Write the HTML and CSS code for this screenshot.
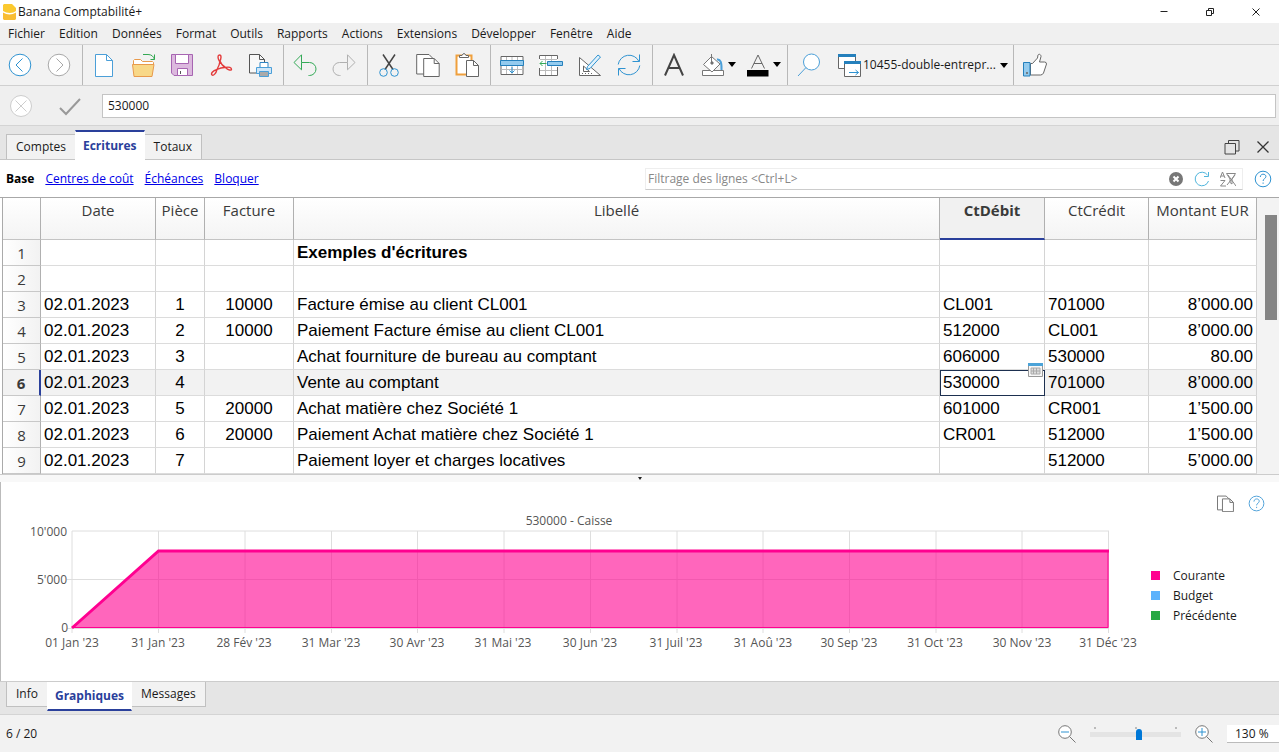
FILE: index.html
```html
<!DOCTYPE html>
<html lang="fr">
<head>
<meta charset="utf-8">
<title>Banana Comptabilité+</title>
<link rel="stylesheet" href="styles.css">
</head>
<body>
<svg class="defs" aria-hidden="true">
  <symbol id="copy" viewBox="0 0 24 24"><path d="M8 21H.7V1.5H13l4 4" fill="#fff"/><path d="M7.7 5.5h10.5l5 5v13H7.7z" fill="#fff"/><path d="M18.2 5.5v5h5"/></symbol>
  <symbol id="help" viewBox="0 0 18 18"><circle cx="9" cy="9" r="7.8" fill="#fff"/><path d="M6.3 7c0-3.800 5.600-3.600 5.600-.4 0 2-2.800 2-2.800 4.400M9.100 12.500v1.300"/></symbol>
</svg>
<div class="app">
  <header class="titlebar">
    <svg class="logo" viewBox="0 0 13 17"><path d="M1 1h8l4 4v3c-3 2.500-9 2.500-13 0V2z" fill="#fbc92f"/><path d="M0 9.500c4 2.500 9 2.500 13 0V16l-1 1H1l-1-1z" fill="#f9bd32"/></svg>
    <h1 class="title">Banana Comptabilité+</h1>
    <div class="window-buttons">
      <button aria-label="Réduire"><svg viewBox="0 0 10 10"><path d="M1.500 4.500h7"/></svg></button>
      <button aria-label="Restaurer"><svg viewBox="0 0 10 10"><path d="M1.500 3.500h5v5h-5zM3.500 3.500v-2h5v5h-2"/></svg></button>
      <button aria-label="Fermer"><svg viewBox="0 0 10 10"><path d="M1.500 1.500l7 7M8.500 1.500l-7 7"/></svg></button>
    </div>
  </header>

  <nav class="menubar">
    <button>Fichier</button><button>Edition</button><button>Données</button><button>Format</button><button>Outils</button><button>Rapports</button><button>Actions</button><button>Extensions</button><button>Développer</button><button>Fenêtre</button><button>Aide</button>
  </nav>

  <div class="toolbar">
    <div class="group">
      <button aria-label="Précédent"><svg viewBox="0 0 24 24" stroke="#2f93d1"><circle cx="12" cy="12" r="10.800" fill="#fff"/><path d="M14.500 5.500L8 12l6.500 6.500"/></svg></button>
      <button aria-label="Suivant"><svg viewBox="0 0 24 24" stroke="#a8a8a8"><circle cx="12" cy="12" r="10.800" fill="#fff"/><path d="M9.500 5.500L16 12l-6.500 6.500"/></svg></button>
    </div>
    <div class="group">
      <button aria-label="Nouveau"><svg viewBox="0 0 24 24" stroke="#4b9fd8"><path d="M3.500 1.500h11l6 6v16h-17z" fill="#fff"/><path d="M14.500 1.500v6h6"/></svg></button>
      <button aria-label="Ouvrir"><svg viewBox="0 0 24 24" stroke="#e89a4c"><path d="M2.500 12V7.500l1-1h6l2 2h10l1 1V12" fill="#fff"/><path d="M1.500 11.500h21.500l-2 12H3z" fill="#f8d888"/><path d="M12 1.500h5q5 0 6.500 5M19.500 6.500h4V1.500" stroke="#34a853" /></svg></button>
      <button aria-label="Enregistrer"><svg viewBox="0 0 24 24" stroke="#a765b2"><path d="M1.500 1.500h21v21H4l-2.500-2.500z" fill="#dcb9de"/><path d="M5.500 1.500h13v9h-13zM7.500 15.500h10v7h-10z" fill="#fff"/><path d="M10.500 18v3" stroke="#555"/></svg></button>
      <button aria-label="PDF"><svg viewBox="0 0 24 24" stroke="#e33b3b"><path d="M10.500 8.500C8.500 5 8.500 2 10.500 2s2 3.500 0 6.500M11 8c1 3 3.500 5.500 5.500 6.500M16.500 14.500c3.500-1 6 .2 6 1.700s-3.500 1.300-6-1.700M16.500 14.500c-3-.2-6 .7-8.500 2M8 16.500c-1 4-3.500 6.500-5 5.500s.5-4.500 5-5.500M8 16.500c1.500-2.500 2.700-5.500 3-8.500" stroke-width="1.400"/></svg></button>
      <button aria-label="Imprimer"><svg viewBox="0 0 24 24" stroke="#555"><path d="M1.500 1.500h10l5 5v13.500h-15z" fill="#f8f8f8"/><path d="M11.500 1.500v5h5"/><path d="M12 14V9.500h8V14" fill="#fff" stroke="#2f84c3"/><path d="M8.500 14.500h15v6h-15z" fill="#cfe6f8" stroke="#4b9fd8"/><path d="M11.500 18.500h9v5h-9z" fill="#aaa" stroke="#4b9fd8"/></svg></button>
    </div>
    <div class="group">
      <button aria-label="Annuler"><svg viewBox="0 0 24 24" stroke="#35aa58"><path d="M8.500 9.500V1.800L1 9.500l7.500 7.300V9.500h8a6.400 6.400 0 0 1 0 13h-1"/></svg></button>
      <button aria-label="Rétablir"><svg viewBox="0 0 24 24" stroke="#b0b0b0"><path d="M15.500 9.500V1.800L23 9.500l-7.500 7.300V9.500h-8a6.400 6.400 0 0 0 0 13h1"/></svg></button>
    </div>
    <div class="group">
      <button aria-label="Couper"><svg viewBox="0 0 24 24" stroke="#444"><path d="M6 1.500l10 15M18 1.500l-10 15" stroke-width="1.500"/><circle cx="6.500" cy="19.500" r="3.800" stroke="#2f93d1"/><circle cx="17.500" cy="19.500" r="3.800" stroke="#2f93d1"/></svg></button>
      <button aria-label="Copier"><svg viewBox="0 0 24 24" stroke="#666"><use href="#copy"/></svg></button>
      <button aria-label="Coller"><svg viewBox="0 0 24 24" stroke="#666"><path d="M1.500 2.500h15v19h-15z" fill="#fff" stroke="#efa03d" stroke-width="2"/><path d="M4.500 4.500V2.500h2.500q2-4 4 0H13.500v2z" fill="#fff"/><path d="M11.500 7.500h7l5 5v11h-12z" fill="#fff"/><path d="M18.500 7.500v5h5"/></svg></button>
    </div>
    <div class="group">
      <button aria-label="Insérer lignes"><svg viewBox="0 0 24 24" stroke="#666"><path d="M1 3.500h22v18H1z" fill="#fff"/><path d="M1 16.500h22M6.500 4v17M12 4v17M17.500 4v17" stroke="#bbb"/><path d="M.500 7.500h23v5H.500z" fill="#94cbee" stroke="#2580bc"/><path d="M12 14v6M9.500 17.500L12 20l2.500-2.500" stroke="#2f93d1"/></svg></button>
      <button aria-label="Ajouter ligne"><svg viewBox="0 0 24 24" stroke="#666"><path d="M.500 2.500h18v20H.500z" fill="#fff" stroke="none"/><path d="M1 17.500h17M1 6.500h17M6.500 3v19M12.500 3v19" stroke="#bbb"/><path d="M.500 6V2.500h18V6M.500 15v7.500h18V14"/><path d="M8.500 8.500h15v4h-15z" fill="#94cbee" stroke="#2580bc"/><path d="M7.500 10.500H1M3.500 8L1 10.500 3.500 13" stroke="#35aa58"/></svg></button>
      <button aria-label="Vérifier"><svg viewBox="0 0 24 24" stroke="#666"><path d="M1.500 4.500v18h21z" fill="#fff"/><path d="M5.500 13v5.500h6z"/><path d="M4 20.500h12" stroke-dasharray="1 2"/><path d="M8.500 16.500l1-3L20 2l2.500 2L12 15.500z" fill="#e2f2fc" stroke="#2f93d1"/></svg></button>
      <button aria-label="Recalculer"><svg viewBox="0 0 24 24" stroke="#2f93d1"><path d="M22.500 1.500v7h-7M22 8.500A11 11 0 0 0 1.200 11.500M1.500 22.500v-7h7M2 15.500a11 11 0 0 0 20.800-3"/></svg></button>
    </div>
    <div class="group">
      <button aria-label="Police"><svg viewBox="0 0 24 24" stroke="#444"><path d="M3 22.500L12 2l9 20.500M6.500 15h11" stroke-width="2"/></svg></button>
      <button class="split" aria-label="Couleur de fond"><svg viewBox="0 0 24 24" stroke="#777"><path d="M16 6.500q5-1 4.500 10.500" stroke="#4b9fd8" stroke-width="2"/><path d="M1.500 17.500h21v5h-21z" fill="#fff"/><path d="M2.500 11.500L10.500 3.500l8.500 7.500-8 8z" fill="#fff"/><path d="M10.500 1v8"/><circle cx="11" cy="10" r="1.200" fill="#666"/></svg><i class="caret"></i></button>
      <button class="split" aria-label="Couleur du texte"><svg viewBox="0 0 24 24" stroke="#666"><path d="M5.500 15.500L12 2l6.500 13.500M8 10.500h8"/><path d="M1 17h21.500v6.500H1z" fill="#000" stroke="none"/></svg><i class="caret"></i></button>
    </div>
    <div class="group">
      <button aria-label="Rechercher"><svg viewBox="0 0 24 24" stroke="#4b9fd8"><circle cx="14.500" cy="9" r="8" fill="#fff"/><path d="M9 14.500l-8 8.500"/></svg></button>
      <label class="file-picker">
        <svg viewBox="0 0 24 24" stroke="#666"><path d="M1.500 1.500h17v14h-17z" fill="#fff"/><path d="M1 2.500h18" stroke="#2580bc" stroke-width="3"/><path d="M7.500 8.500h16v15h-16z" fill="#fff"/><path d="M7 9.500h17" stroke="#2580bc" stroke-width="3"/><path d="M12 19.500h9.500M18.500 17l3 2.500-3 2.500" stroke="#2f93d1"/></svg>
        <select aria-label="Fichier ouvert"><option>10455-double-entrepr...</option></select>
        <i class="caret"></i>
      </label>
    </div>
    <div class="group">
      <button aria-label="J’aime"><svg viewBox="0 0 24 24" stroke="#666"><path d="M7.500 10.500h2l5-5.500.5-3c1-1.500 3-.5 3 1.500L16.500 9h5q2 0 2 2l-3 9q-1 2-3 2h-10z" fill="#fff"/><path d="M.500 9.500h6.500v13.500H.500z" fill="#94cbee" stroke="#2580bc"/><circle cx="4" cy="20" r=".7"/></svg></button>
    </div>
  </div>

  <div class="editbar">
    <button aria-label="Annuler la saisie"><svg viewBox="0 0 24 24" stroke="#cdcdcd"><circle cx="12" cy="12" r="10.500" fill="#fff"/><path d="M6.500 6.500l11 11M17.500 6.500l-11 11"/></svg></button>
    <button aria-label="Valider la saisie"><svg viewBox="0 0 24 24" stroke="#999"><path d="M2 14l6 6L22 5" stroke-width="2"/></svg></button>
    <input type="text" value="530000" aria-label="Contenu de la cellule">
  </div>

  <div class="tabs top-tabs">
    <button class="tab">Comptes</button><button class="tab active">Ecritures</button><button class="tab">Totaux</button>
    <div class="tab-tools">
      <button aria-label="Détacher"><svg viewBox="0 0 16 16" stroke="#444"><path d="M1 4.500h10.500v10.500H1zM4.500 4.500V1.500h10.500v10.500h-3.500"/></svg></button>
      <button aria-label="Fermer le tableau"><svg viewBox="0 0 16 16" stroke="#333"><path d="M2.500 2.500l11 11M13.500 2.500l-11 11" stroke-width="1.300"/></svg></button>
    </div>
  </div>

  <div class="views">
    <strong>Base</strong><a href="#">Centres de coût</a><a href="#">Échéances</a><a href="#">Bloquer</a>
    <div class="filter">
      <input type="text" placeholder="Filtrage des lignes &lt;Ctrl+L&gt;" aria-label="Filtrage des lignes">
      <button aria-label="Effacer"><svg viewBox="0 0 16 16"><circle cx="8" cy="8" r="7" fill="#777" stroke="none"/><path d="M5.500 5.500l5 5M10.500 5.500l-5 5" stroke="#fff" stroke-width="2"/></svg></button>
      <button aria-label="Actualiser"><svg viewBox="0 0 16 16" stroke="#50b5dc"><path d="M14.500 10A6.800 6.800 0 1 1 13.500 4M14.500 1v4.500H10"/></svg></button>
      <button aria-label="Trier et filtrer"><svg viewBox="0 0 16 16" stroke="#888"><path d="M0 7l2.500-6L5 7M1 5h3M.500 9.500H5L.500 15H6M6.500 2.500h9L12 8v5l-2-1.500V8zM7 14l8-10M8 4l8 11"/></svg></button>
    </div>
    <button class="help" aria-label="Aide"><svg viewBox="0 0 18 18" stroke="#2f93d1"><use href="#help"/></svg></button>
  </div>

  <main class="sheet">
    <table>
      <colgroup><col class="c-num"><col class="c-date"><col class="c-doc"><col class="c-inv"><col><col class="c-deb"><col class="c-cre"><col class="c-amt"></colgroup>
      <thead><tr><th></th><th>Date</th><th>Pièce</th><th>Facture</th><th>Libellé</th><th class="current">CtDébit</th><th>CtCrédit</th><th>Montant EUR</th></tr></thead>
      <tbody>
        <tr><th>1</th><td></td><td></td><td></td><td><b>Exemples d'écritures</b></td><td></td><td></td><td></td></tr>
        <tr><th>2</th><td></td><td></td><td></td><td></td><td></td><td></td><td></td></tr>
        <tr><th>3</th><td>02.01.2023</td><td>1</td><td>10000</td><td>Facture émise au client CL001</td><td>CL001</td><td>701000</td><td>8’000.00</td></tr>
        <tr><th>4</th><td>02.01.2023</td><td>2</td><td>10000</td><td>Paiement Facture émise au client CL001</td><td>512000</td><td>CL001</td><td>8’000.00</td></tr>
        <tr><th>5</th><td>02.01.2023</td><td>3</td><td></td><td>Achat fourniture de bureau au comptant</td><td>606000</td><td>530000</td><td>80.00</td></tr>
        <tr class="selected"><th>6</th><td>02.01.2023</td><td>4</td><td></td><td>Vente au comptant</td><td class="cursor">530000<svg class="cell-badge" viewBox="0 0 15 14"><path d="M.500.500h14v13H.500z" fill="#f7f7f7" stroke="#999"/><path d="M0 1.500h15" stroke="#4ba3d8" stroke-width="3"/><path d="M3 5h9v6H3z" fill="#ddd" stroke="#aaa"/><path d="M5.500 5v6M8.500 5v6M3 8h9" stroke="#aaa"/></svg></td><td>701000</td><td>8’000.00</td></tr>
        <tr><th>7</th><td>02.01.2023</td><td>5</td><td>20000</td><td>Achat matière chez Société 1</td><td>601000</td><td>CR001</td><td>1’500.00</td></tr>
        <tr><th>8</th><td>02.01.2023</td><td>6</td><td>20000</td><td>Paiement Achat matière chez Société 1</td><td>CR001</td><td>512000</td><td>1’500.00</td></tr>
        <tr><th>9</th><td>02.01.2023</td><td>7</td><td></td><td>Paiement loyer et charges locatives</td><td></td><td>512000</td><td>5’000.00</td></tr>
      </tbody>
    </table>
    <div class="scrollbar"><div class="thumb"></div></div>
  </main>

  <div class="splitter"><i></i></div>

  <section class="chart-panel">
    <div class="chart-tools">
      <button aria-label="Copier le graphique"><svg viewBox="0 0 24 24" stroke="#777" stroke-width="1.400"><use href="#copy"/></svg></button>
      <button aria-label="Aide du graphique"><svg viewBox="0 0 18 18" stroke="#4b9fd8"><use href="#help"/></svg></button>
    </div>
    <svg class="chart" viewBox="0 0 1150 199" role="img" aria-label="530000 - Caisse">
      <text class="axis mid" x="568" y="43">530000 - Caisse</text>
      <g class="gridlines">
        <path d="M71 49H1108M66 97.500H1108M66 146.500H1108"/>
        <path d="M71 49V151M157.500 49V151M244 49V151M330.500 49V151M416.500 49V151M503 49V151M589.500 49V151M676 49V151M762 49V151M848.500 49V151M935 49V151M1021 49V151M1107.500 49V151"/>
      </g>
      <path class="area" d="M71 146L157.500 69H1107.500V146z"/>
      <path class="base" d="M71 145.500H1107V69"/>
      <path class="line" d="M71 146L157.500 69H1108"/>
      <g class="axis end"><text x="66" y="54">10'000</text><text x="66" y="102">5'000</text><text x="67" y="150">0</text></g>
      <g class="axis mid"><text x="71" y="165">01 Jan '23</text><text x="157" y="165">31 Jan '23</text><text x="243" y="165">28 Fév '23</text><text x="330" y="165">31 Mar '23</text><text x="416" y="165">30 Avr '23</text><text x="502" y="165">31 Mai '23</text><text x="589" y="165">30 Jun '23</text><text x="675" y="165">31 Juil '23</text><text x="762" y="165">31 Aoû '23</text><text x="848" y="165">30 Sep '23</text><text x="934" y="165">31 Oct '23</text><text x="1021" y="165">30 Nov '23</text><text x="1107" y="165">31 Déc '23</text></g>
    </svg>
    <ul class="legend"><li class="courante">Courante</li><li class="budget">Budget</li><li class="precedente">Précédente</li></ul>
  </section>

  <div class="tabs bottom-tabs"><button class="tab">Info</button><button class="tab active">Graphiques</button><button class="tab">Messages</button></div>

  <footer class="status">
    <span>6 / 20</span>
    <div class="zoom">
      <button aria-label="Zoom arrière"><svg viewBox="0 0 18 18" stroke="#777"><circle cx="7" cy="7" r="6.300" fill="#fff"/><path d="M11.500 11.500l6 6"/><path d="M3 7h8" stroke="#2f93d1"/></svg></button>
      <div class="slider"><div class="ticks"><i></i><i></i><i></i></div><input type="range" min="0" max="100" value="54" aria-label="Zoom"></div>
      <button aria-label="Zoom avant"><svg viewBox="0 0 18 18" stroke="#777"><circle cx="7" cy="7" r="6.300" fill="#fff"/><path d="M11.500 11.500l6 6"/><path d="M3 7h8M7 3v8" stroke="#2f93d1"/></svg></button>
      <input class="zoom-value" type="text" value="130 %" aria-label="Niveau de zoom">
    </div>
  </footer>
</div>
</body>
</html>
```

FILE: styles.css
```css
* { box-sizing: border-box; }
body { margin: 0; background: #f2f2f2; color: #1a1a1a; font: 12px/16px "Open Sans", "Noto Sans", sans-serif; }
button, input, select { font: inherit; color: inherit; }
button { padding: 0; border: 0; background: none; display: flex; align-items: center; justify-content: center; }
svg { fill: none; display: block; flex: none; }
.defs { width: 0; height: 0; position: absolute; }
.app { min-height: 100vh; display: flex; flex-direction: column; }

.titlebar { height: 23px; display: flex; align-items: center; padding-left: 3px; background: #fff; }
.logo { width: 13px; height: 17px; }
.title { margin: 0 0 0 2px; font-size: 12px; font-weight: 400; }
.window-buttons { margin-left: auto; display: flex; }
.window-buttons button { width: 46px; height: 22px; }
.window-buttons svg { width: 10px; height: 10px; stroke: #222; }

.menubar { height: 21px; display: flex; padding-left: 8px; gap: 14px; background: #f0f0f0; }

.toolbar { height: 42px; display: flex; background: #f2f2f2; border-top: 1px solid #d4d4d4; border-bottom: 1px solid #d0d0d0; }
.group { display: flex; align-items: center; }
.group + .group { margin-left: 4px; padding-left: 1px; border-left: 1px solid #b8b8b8; }
.toolbar button { width: 39px; height: 40px; padding-bottom: 1px; }
.toolbar svg { width: 24px; height: 24px; }
.toolbar .split { width: 45px; padding-left: 5px; gap: 3px; }
.caret { width: 0; height: 0; border: 4px solid transparent; border-top: 5px solid #000; border-bottom: 0; }
.file-picker { display: flex; align-items: center; padding: 0 1px 0 9px; gap: 2px; }
.file-picker select { width: 135px; padding: 0; border: 0; background: none; appearance: none; }

.editbar { height: 39px; display: flex; align-items: center; padding: 0 3px 0 9px; background: #efefef; }
.editbar svg { width: 24px; height: 24px; }
.editbar button + button { margin: 0 20px 0 25px; }
.editbar input { flex: 1; height: 24px; padding: 0 5px; border: 1px solid #c4c4c4; background: #fff; }

.tabs { display: flex; padding-left: 6px; background: #e5e5e5; }
.top-tabs { height: 35px; align-items: flex-end; border-top: 1px solid #d4d4d4; border-bottom: 1px solid #c6c6c6; }
.tab { height: 25px; padding: 0 9px; background: #f2f2f2; border: 1px solid #c0c0c0; }
.top-tabs .tab { border-bottom: 0; }
.tabs .active { padding: 0 7px; color: #2a409b; font-weight: 700; background: #fff; border-color: #fff; position: relative; }
.tab + .tab { margin-left: -1px; }
.top-tabs .active { height: 30px; margin-bottom: -1px; border-top: 2px solid #2a409b; }
.tab-tools { margin-left: auto; display: flex; gap: 15px; padding: 0 8px 4px 0; }
.tab-tools svg { width: 16px; height: 16px; }

.views { height: 37px; display: flex; align-items: center; padding: 0 7px 0 6px; gap: 11px; background: #fff; color: #000; }
.views a { color: #0000e8; }
.filter { flex: 0 0 598px; max-width: 50%; height: 22px; margin-left: auto; display: flex; align-items: center; gap: 10px; padding-right: 6px; border: 1px solid #eee; border-bottom-color: #ccc; }
.filter input { flex: 1; min-width: 0; height: 20px; border: 0; padding: 0 2px; outline: 0; }
.filter input::placeholder { color: #888; opacity: 1; }
.filter svg { width: 16px; height: 16px; }
.help svg { width: 18px; height: 18px; }

.sheet { display: flex; padding-left: 2px; background: #fff; border-top: 1px solid #a8a8a8; }
table { flex: 1; table-layout: fixed; border-collapse: separate; border-spacing: 0; border-left: 1px solid #aaa; font: 17px/25px "Liberation Sans", Arial, sans-serif; color: #000; }
.c-num { width: 38px; } .c-date { width: 115px; } .c-doc { width: 49px; } .c-inv { width: 89px; }
.c-deb { width: 105px; } .c-cre { width: 104px; } .c-amt { width: 108px; }
th { padding: 0; font: 15px/25px "Open Sans", "Noto Sans", sans-serif; color: #3a3a3a; border-right: 1px solid #b0b0b0; white-space: nowrap; }
thead th { height: 42px; vertical-align: top; border-bottom: 1px solid #c4c4c4; background: linear-gradient(#fff, #f4f4f4); }
thead .current { font-weight: 700; background: #f1f1f1; border-bottom: 2px solid #2a409b; }
tbody th { background: linear-gradient(90deg, #fff, #f2f2f2); border-bottom: 1px solid #c8c8c8; line-height: 24px; }
td { height: 26px; padding: 0 3px; border-right: 1px solid #d4d4d4; border-bottom: 1px solid #dcdcdc; white-space: nowrap; }
td:nth-child(3), td:nth-child(4) { text-align: center; }
td:nth-child(8) { text-align: right; }
.selected td, .selected th { background: #f2f2f2; }
.selected th { font-weight: 700; border-right: 2px solid #2a409b; }
.selected .cursor { position: relative; background: #fff; outline: 1px solid #1d3050; outline-offset: -1px; }
.cell-badge { position: absolute; top: -7px; right: 1px; width: 15px; height: 14px; }
.scrollbar { width: 22px; padding: 17px 2px 0 8px; background: #f3f3f3; }
.thumb { height: 105px; background: #858585; }

.splitter { height: 8px; display: flex; justify-content: center; align-items: center; background: #f8f8f8; border-top: 1px solid #ccc; }
.splitter i { border: 2px solid transparent; border-top: 3px solid #222; border-bottom: 0; }

.chart-panel { position: relative; flex: 1; min-height: 199px; display: flex; align-items: center; background: #fff; border-left: 1px solid #bbb; }
.chart-tools { position: absolute; top: 13px; right: 14px; display: flex; gap: 14px; }
.chart-tools svg { width: 17px; height: 17px; }
.chart { flex: 1; min-width: 0; }
.axis { fill: #555; }
.mid { text-anchor: middle; }
.end { text-anchor: end; }
.gridlines { stroke: #dedede; }
.area { fill: #ff0090; fill-opacity: .6; }
.base { stroke: #ff0090; stroke-width: 1; }
.line { stroke: #ff0090; stroke-width: 3; }
.legend { width: 128px; margin: 28px 0 0; padding: 0; list-style: none; }
.legend li { display: flex; align-items: center; gap: 13px; height: 20px; }
.legend li::before { content: ""; width: 9px; height: 9px; background: #ff0090; }
.legend .budget::before { background: #5cb2fc; }
.legend .precedente::before { background: #27a844; }

.bottom-tabs { height: 34px; border-top: 1px solid #ccc; border-bottom: 1px solid #d4d4d4; }
.bottom-tabs .tab { border-top: 0; }
.bottom-tabs .active { height: 29px; border-bottom: 2px solid #2a409b; }

.status { height: 37px; display: flex; align-items: center; justify-content: space-between; padding-left: 6px; background: #f2f2f2; }
.zoom { display: flex; align-items: center; gap: 14px; }
.zoom svg { width: 18px; height: 18px; }
.slider { position: relative; width: 91px; height: 14px; }
.ticks { position: absolute; inset: 0 4px auto; display: flex; justify-content: space-between; }
.ticks i { width: 2px; height: 2px; background: #bbb; }
.slider input { display: block; width: 100%; height: 14px; margin: 0; appearance: none; background: linear-gradient(#e4e4e4, #e4e4e4) center 5px / 100% 5px no-repeat; }
.slider input::-webkit-slider-thumb { appearance: none; width: 6px; height: 11px; margin-top: 2px; background: #0078d7; border-radius: 3px 3px 0 0; }
.zoom-value { width: 52px; height: 18px; padding: 0 8px; border: 0; border-bottom: 1px solid #bbb; background: #fff; }
```
